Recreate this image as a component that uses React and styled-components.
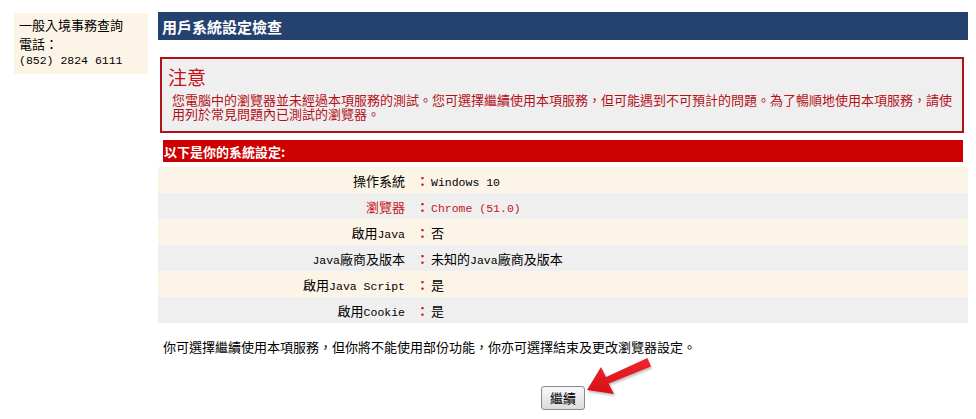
import React from "react";
import styled, { createGlobalStyle } from "styled-components";

const Global = createGlobalStyle`
  html, body { margin: 0; padding: 0; background: #fff; }
  body {
    font-family: "Noto Sans CJK TC", "Noto Sans CJK SC", sans-serif;
    font-size: 13px;
    color: #000;
  }
`;

const Page = styled.div`
  display: flex;
  align-items: flex-start;
  gap: 10px;
  padding: 12px 8px 0 14px;
  height: 419px;
  box-sizing: border-box;
`;

const Sidebar = styled.div`
  flex: none;
  width: 134px;
  box-sizing: border-box;
  margin-top: 1px;
  padding: 2px 5px 7px;
  background: #fcf4e6;
`;

const Line = styled.div`
  white-space: nowrap;
  line-height: ${(p) => (p.$tight ? "12px" : "19px")};
`;

const Latin = styled.span`
  font-family: "Liberation Mono", monospace;
  font-size: 11.5px;
`;

const Main = styled.div`
  width: 810px;
  display: flex;
  flex-direction: column;
`;

const Header = styled.div`
  height: 28px;
  display: flex;
  align-items: center;
  padding-left: 4px;
  background: #24416f;
  color: #fff;
  font-weight: 700;
  font-size: 15px;
`;

const Notice = styled.div`
  margin: 17px 4px 0 2px;
  border: 2px solid #ad141c;
  background: #efefef;
  padding: 7px 6px 10px 6px;
  color: #b3111a;
`;

const NoticeTitle = styled.div`
  font-size: 19px;
  line-height: 22px;
  color: #c4101a;
`;

const NoticeBody = styled.div`
  margin: 5px 0 0 4px;
  line-height: 14px;
`;

const SectionBar = styled.div`
  margin: 7px 5px 0 5px;
  height: 22px;
  display: flex;
  align-items: center;
  padding-left: 1px;
  background: #cc0000;
  color: #fff;
  font-weight: 700;
  font-size: 13px;
`;

const Table = styled.div`
  margin-top: 5px;
  display: flex;
  flex-direction: column;
`;

const Row = styled.div`
  display: grid;
  grid-template-columns: 258px 13px 1fr;
  align-items: center;
  height: 26px;
  background: ${(p) => (p.$alt ? "#efefef" : "#fcf4e6")};
  color: ${(p) => (p.$warn ? "#c8141c" : "#000")};
`;

const Label = styled.div`
  text-align: right;
  padding-right: 11px;
  white-space: nowrap;
`;

const Colon = styled.div`
  color: #c8141c;
  text-align: center;
  font-weight: 700;
`;

const Value = styled.div`
  padding-left: 2px;
  white-space: nowrap;
`;

const Footer = styled.div`
  margin-top: 17px;
  padding-left: 5px;
  line-height: 14px;
`;

const ButtonRow = styled.div`
  margin-top: 32px;
  display: flex;
  justify-content: center;
`;

const ButtonWrap = styled.div`
  position: relative;
`;

const Button = styled.button`
  width: 44px;
  height: 24px;
  padding: 0;
  border: 1px solid #8a8a8a;
  border-radius: 3px;
  background: linear-gradient(#f8f8f8, #dcdcdc);
  font-family: "Noto Sans CJK TC", sans-serif;
  font-size: 13px;
  color: #000;
  line-height: 20px;
`;

const Arrow = styled.svg`
  position: absolute;
  left: 45px;
  top: -29px;
  width: 68px;
  height: 44px;
  overflow: visible;
  filter: drop-shadow(1px 2px 1px rgba(0, 0, 0, 0.25));
`;

const rows = [
  { label: "操作系統", value: <Latin>Windows 10</Latin> },
  { label: "瀏覽器", value: <Latin>Chrome (51.0)</Latin>, warn: true },
  { label: <>啟用<Latin>Java</Latin></>, value: "否" },
  { label: <><Latin>Java</Latin>廠商及版本</>, value: <>未知的<Latin>Java</Latin>廠商及版本</> },
  { label: <>啟用<Latin>Java Script</Latin></>, value: "是" },
  { label: <>啟用<Latin>Cookie</Latin></>, value: "是" },
];

export default function App() {
  return (
    <>
      <Global />
      <Page>
        <Sidebar>
          <Line>一般入境事務查詢</Line>
          <Line>電話：</Line>
          <Line $tight><Latin>(852) 2824 6111</Latin></Line>
        </Sidebar>
        <Main>
          <Header>用戶系統設定檢查</Header>
          <Notice>
            <NoticeTitle>注意</NoticeTitle>
            <NoticeBody>
              您電腦中的瀏覽器並未經過本項服務的測試。您可選擇繼續使用本項服務，但可能遇到不可預計的問題。為了暢順地使用本項服務，請使用列於常見問題內已測試的瀏覽器。
            </NoticeBody>
          </Notice>
          <SectionBar>以下是你的系統設定:</SectionBar>
          <Table>
            {rows.map((r, i) => (
              <Row key={i} $alt={i % 2 === 1} $warn={r.warn}>
                <Label>{r.label}</Label>
                <Colon>：</Colon>
                <Value>{r.value}</Value>
              </Row>
            ))}
          </Table>
          <Footer>
            你可選擇繼續使用本項服務，但你將不能使用部份功能，你亦可選擇結束及更改瀏覽器設定。
          </Footer>
          <ButtonRow>
            <ButtonWrap>
              <Button type="button">繼續</Button>
              <Arrow viewBox="0 0 68 44">
                <defs>
                  <linearGradient id="ag" x1="0" y1="0" x2="0" y2="1">
                    <stop offset="0" stopColor="#f0262c" />
                    <stop offset="1" stopColor="#d80f16" />
                  </linearGradient>
                </defs>
                <polygon
                  points="1,33 15,10 20,20 61.4,1 65,9.5 22.6,26.5 28,37"
                  fill="url(#ag)"
                />
              </Arrow>
            </ButtonWrap>
          </ButtonRow>
        </Main>
      </Page>
    </>
  );
}
